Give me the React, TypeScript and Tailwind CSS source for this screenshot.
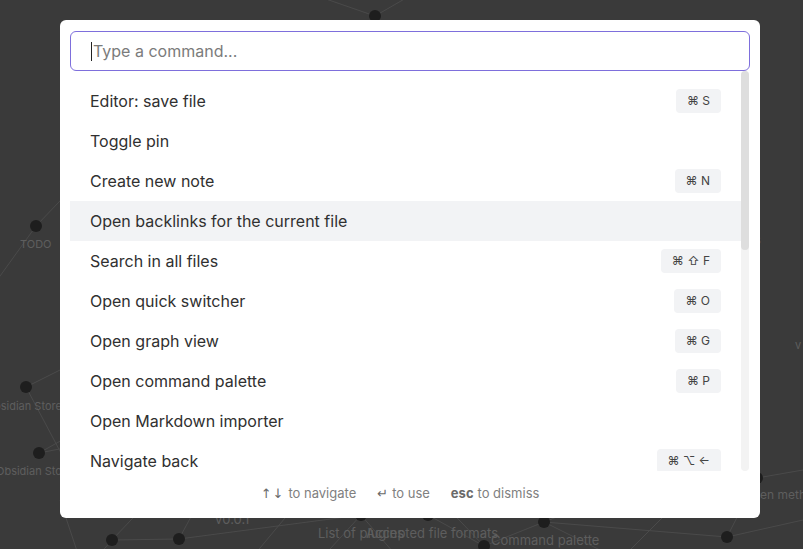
import React from 'react';

interface Command {
  label: string;
  keys?: string;
}

const commands: Command[] = [
  { label: 'Editor: save file', keys: '⌘ S' },
  { label: 'Toggle pin' },
  { label: 'Create new note', keys: '⌘ N' },
  { label: 'Open backlinks for the current file' },
  { label: 'Search in all files', keys: '⌘ ⇧ F' },
  { label: 'Open quick switcher', keys: '⌘ O' },
  { label: 'Open graph view', keys: '⌘ G' },
  { label: 'Open command palette', keys: '⌘ P' },
  { label: 'Open Markdown importer' },
  { label: 'Navigate back', keys: '⌘ ⌥ ←' },
];

const nodes: [number, number][] = [
  [375, 16], [36, 226], [26, 387], [39, 453], [112, 540], [179, 539],
  [361, 515], [428, 515], [544, 522], [484, 546], [727, 537], [757, 478],
  [400, 560], [620, 560],
];

const edges: [number, number, number, number][] = [
  [36, 226, -10, 290], [36, 226, 80, 180], [26, 387, 80, 360], [26, 387, 70, 470],
  [39, 453, 80, 445], [39, 453, 80, 430], [112, 540, 60, 600], [112, 540, 150, 500],
  [112, 540, 179, 539], [179, 539, 200, 500], [179, 539, 361, 515], [361, 515, 428, 515],
  [361, 515, 320, 560], [361, 515, 400, 560], [428, 515, 484, 546], [484, 546, 544, 522],
  [544, 522, 727, 537], [544, 522, 620, 560], [727, 537, 757, 478], [727, 537, 803, 520],
  [484, 546, 440, 500], [544, 522, 600, 500], [757, 478, 803, 470], [375, 16, 300, -10],
  [375, 16, 420, -10], [250, 560, 300, 500], [620, 560, 680, 500], [80, 560, 60, 500],
];

function GraphBackdrop() {
  return (
    <svg className="absolute inset-0" width="803" height="549" viewBox="0 0 803 549">
      {edges.map(([x1, y1, x2, y2], i) => (
        <line key={i} x1={x1} y1={y1} x2={x2} y2={y2} stroke="#4a4a4a" strokeWidth="1" />
      ))}
      {nodes.map(([cx, cy], i) => (
        <circle key={i} cx={cx} cy={cy} r="6" fill="#1e1e1e" />
      ))}
      <g fill="#5e5e5e" fontFamily="Inter, 'Liberation Sans', sans-serif" fontSize="11">
        <text x="20" y="248">TODO</text>
        <text x="-6" y="410">bsidian Store</text>
        <text x="-4" y="475">Obsidian Store</text>
        <text x="755" y="244">s</text>
        <text x="795" y="349">v</text>
        <text x="760" y="499" fontSize="12">en meth</text>
      </g>
      <g fill="#5e5e5e" fontFamily="Inter, 'Liberation Sans', sans-serif" fontSize="13">
        <text x="215" y="524">v0.0.1</text>
        <text x="318" y="538">List of plugins</text>
        <text x="366" y="538">Accepted file formats</text>
        <text x="491" y="545">Command palette</text>
      </g>
    </svg>
  );
}

export default function App() {
  return (
    <div
      className="relative h-[549px] w-[803px] overflow-hidden bg-[#3a3a3a] pt-[20px]"
      style={{ fontFamily: "Inter, 'Liberation Sans', sans-serif" }}
    >
      <GraphBackdrop />

      <div className="relative ml-[60px] flex h-[498px] w-[700px] flex-col rounded-md bg-white px-[10px] pt-[11px]">
        {/* Input */}
        <div className="flex h-[40px] items-center rounded-md border border-[#7e6fdc] px-5">
          <span className="mr-[1px] h-[19px] w-[1px] bg-[#222]" />
          <span className="text-[16px] text-[#7b7b7b]">Type a command...</span>
        </div>

        {/* List + scrollbar */}
        <div className="flex h-[400px]">
          <div className="flex-1 overflow-hidden pt-[10px]">
            {commands.map((c, i) => (
              <div
                key={c.label}
                className={`flex h-[40px] items-center justify-between px-5 ${i === 3 ? 'bg-[#f2f3f5]' : ''}`}
              >
                <span className="text-[16px] text-[#303030]">{c.label}</span>
                {c.keys && (
                  <span
                    className="flex h-[24px] items-center rounded bg-[#f2f3f5] px-[11px] text-[12px] text-[#444]"
                    style={{ fontFamily: "Inter, 'DejaVu Sans', sans-serif" }}
                  >
                    {c.keys}
                  </span>
                )}
              </div>
            ))}
          </div>
          <div className="mr-[1px] flex w-[8px] flex-col rounded-full bg-[#f3f3f3]">
            <div className="h-[179px] rounded-full bg-[#dedede]" />
          </div>
        </div>

        {/* Footer hints */}
        <div className="flex flex-1 items-center justify-center gap-[21px] pb-[2px] pr-[20px] text-[13px] text-[#808080]">
          <span className="flex items-center">
            <span className="mr-1 tracking-[1px] text-[#6a6a6a]" style={{ fontFamily: "'DejaVu Sans', sans-serif", fontSize: 13 }}>↑↓</span>
            to navigate
          </span>
          <span className="flex items-center">
            <span className="mr-1 text-[#6a6a6a]" style={{ fontFamily: "'DejaVu Sans', sans-serif", fontSize: 13 }}>↵</span>
            to use
          </span>
          <span className="flex items-center">
            <span className="mr-1 font-bold text-[#6a6a6a]">esc</span>
            to dismiss
          </span>
        </div>
      </div>
    </div>
  );
}
